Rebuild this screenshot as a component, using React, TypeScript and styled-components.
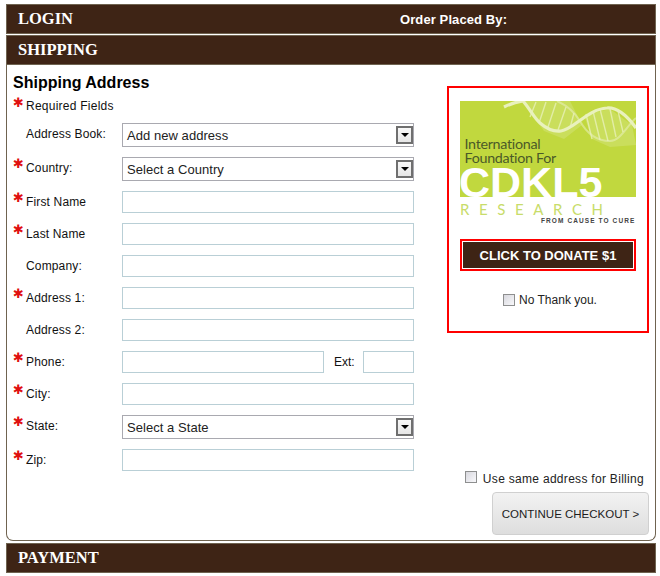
import React from "react";
import styled, { createGlobalStyle } from "styled-components";

const GlobalStyle = createGlobalStyle`
  html, body {
    margin: 0;
    padding: 0;
    background: #fff;
  }
  body {
    font-family: "Liberation Sans", Arial, sans-serif;
    color: #111;
  }
`;

const Page = styled.div`
  width: 650px;
  margin-left: 6px;
  padding-top: 4px;
`;

const Bar = styled.div<{ $gap?: number }>`
  box-sizing: border-box;
  height: 30px;
  margin-bottom: ${(p) => p.$gap ?? 0}px;
  display: flex;
  align-items: center;
  padding-left: 11px;
  background: #3e2415;
  border: 1px solid #6f6350;
  color: #fff;
`;

const BarTitle = styled.span`
  font-family: "Liberation Serif", serif;
  font-weight: bold;
  font-size: 16.5px;
  width: 382px;
`;

const OrderedBy = styled.span`
  font-size: 13px;
  font-weight: bold;
  letter-spacing: 0.1px;
`;

const Panel = styled.div`
  box-sizing: border-box;
  height: 476px;
  margin-bottom: 2px;
  display: flex;
  justify-content: space-between;
  border: 1px solid #6f6350;
  border-top: 0;
  border-radius: 0 0 7px 7px;
  padding: 8px 6px 5px 6px;
`;

const FormColumn = styled.div`
  width: 408px;
`;

const Heading = styled.h2`
  margin: 0;
  font-size: 16px;
  line-height: 19px;
  font-weight: bold;
  color: #000;
`;

const Required = styled.div`
  display: flex;
  align-items: center;
  height: 20px;
  margin-top: 4px;
  margin-bottom: 7px;
  font-size: 12px;
  letter-spacing: 0.25px;
`;

const Star = styled.span<{ $show: boolean }>`
  width: 13px;
  flex: none;
  align-self: flex-start;
  margin-top: -4px;
  color: #e01010;
  font-size: 13px;
  line-height: 22px;
  font-family: "DejaVu Sans", sans-serif;
  visibility: ${(p) => (p.$show ? "visible" : "hidden")};
`;

const Rows = styled.div`
  display: flex;
  flex-direction: column;
  gap: 10px;
`;

const Row = styled.div`
  display: flex;
  align-items: flex-start;
`;

const Label = styled.label`
  width: 96px;
  flex: none;
  padding-top: 1px;
  font-size: 12px;
  line-height: 20px;
  letter-spacing: 0.15px;
`;

const TextInput = styled.input<{ $width?: number }>`
  box-sizing: border-box;
  display: block;
  width: ${(p) => p.$width ?? 292}px;
  height: 22px;
  margin: 0;
  border: 1px solid #b9cfd6;
  background: #fff;
`;

const ExtLabel = styled.span`
  width: 39px;
  padding: 1px 0 0 10px;
  box-sizing: border-box;
  font-size: 12px;
  line-height: 20px;
`;

const SelectBox = styled.div`
  box-sizing: border-box;
  display: flex;
  align-items: center;
  justify-content: space-between;
  width: 292px;
  height: 24px;
  padding: 0 0 0 4px;
  border: 1px solid #a9a9b0;
  font-size: 13px;
  letter-spacing: 0.05px;
  color: #222;
`;

const SelectArrow = styled.span`
  box-sizing: border-box;
  display: flex;
  align-items: center;
  justify-content: center;
  width: 17px;
  height: 18px;
  border: 2px solid #6f6f6f;
  background: linear-gradient(#f8f8f8, #e6e6e6);

  &::after {
    content: "";
    border-left: 4px solid transparent;
    border-right: 4px solid transparent;
    border-top: 4px solid #000;
  }
`;

const SideColumn = styled.div`
  display: flex;
  flex-direction: column;
  justify-content: space-between;
  align-items: flex-end;
`;

const DonateBox = styled.div`
  box-sizing: border-box;
  width: 202px;
  height: 247px;
  margin-top: 13px;
  padding: 13px 11px 0 11px;
  border: 2px solid #f00;
  display: flex;
  flex-direction: column;
  align-items: center;
`;

const LogoSvg = styled.svg`
  display: block;
  flex: none;
  width: 176px;
  height: 124px;
`;

const DonateButton = styled.button`
  box-sizing: border-box;
  flex: none;
  width: 176px;
  height: 32px;
  margin-top: 14px;
  padding: 0;
  background: #3e2415;
  border: 2px solid #f00;
  box-shadow: inset 0 0 0 1px #fff;
  color: #fff;
  font-family: inherit;
  font-size: 13px;
  font-weight: bold;
`;

const CheckLine = styled.label`
  display: flex;
  align-items: center;
  margin: 22px 0 0 4px;
  font-size: 12px;
  color: #222;
`;

const Check = styled.input.attrs({ type: "checkbox" })`
  appearance: none;
  box-sizing: border-box;
  width: 12px;
  height: 12px;
  margin: 0 4px 0 0;
  border: 1px solid #8e8f8f;
  background: linear-gradient(135deg, #d8d8de, #f8f8fb);
`;

const BillingLine = styled(CheckLine)`
  margin: 0;
  padding-right: 5px;
  font-size: 12px;
  letter-spacing: 0.3px;
`;

const BillingCheck = styled(Check)`
  margin: -5px 6px 0 0;
`;

const FooterActions = styled.div`
  display: flex;
  flex-direction: column;
  align-items: flex-end;
`;

const ContinueButton = styled.button`
  box-sizing: border-box;
  width: 157px;
  height: 43px;
  margin-top: 6px;
  padding: 0;
  border: 1px solid #d0d0d0;
  border-radius: 4px;
  background: linear-gradient(#f2f2f2, #dedede);
  color: #1c1c1c;
  font-family: inherit;
  font-size: 11.5px;
`;

type Field =
  | { label: string; required: boolean; kind: "select"; value: string }
  | { label: string; required: boolean; kind: "text" }
  | { label: string; required: boolean; kind: "phone" };

const fields: Field[] = [
  { label: "Address Book:", required: false, kind: "select", value: "Add new address" },
  { label: "Country:", required: true, kind: "select", value: "Select a Country" },
  { label: "First Name", required: true, kind: "text" },
  { label: "Last Name", required: true, kind: "text" },
  { label: "Company:", required: false, kind: "text" },
  { label: "Address 1:", required: true, kind: "text" },
  { label: "Address 2:", required: false, kind: "text" },
  { label: "Phone:", required: true, kind: "phone" },
  { label: "City:", required: true, kind: "text" },
  { label: "State:", required: true, kind: "select", value: "Select a State" },
  { label: "Zip:", required: true, kind: "text" },
];

const Logo = () => (
  <LogoSvg viewBox="0 0 176 124">
    <rect x="0" y="0" width="176" height="96" fill="#c1d83e" />
    <g fill="#cfe16a" opacity="0.7">
      <path d="M62 0L110 0L122 24L104 38L84 30Z" />
      <path d="M124 14L150 8L172 24L176 44L150 46L132 38Z" />
    </g>
    <g fill="none" stroke="#e9f1bd">
      <path d="M97 0C106 4 114 10 120 20C126 31 136 40 150 40C160 40 166 26 176 17" strokeWidth="2" opacity="0.55" />
      <path d="M44 6C50 3 56 1 63 0C70 8 74 17 80 22C87 28 94 31 101 30C114 28 128 8 147 7C158 6 168 16 176 27" strokeWidth="3.2" />
      <path d="M76 1L70 16M86 1L79 22M96 2L88 26M106 6L98 29M114 12L110 27M126 13L132 38M133 10L140 39M140 8L148 40M150 8L156 36M158 10L163 31" strokeWidth="1.4" opacity="0.75" />
    </g>
    <g fontFamily="Lato, sans-serif" fontSize="14.3" fill="#4b5a28" letterSpacing="-0.3">
      <text x="4.5" y="48">International</text>
      <text x="4.5" y="62">Foundation For</text>
    </g>
    <text x="-1" y="96" fontFamily="Liberation Sans, sans-serif" fontWeight="bold" fontSize="43" fill="#fff">
      CDKL5
    </text>
    <text x="0" y="114" fontFamily="Lato, sans-serif" fontSize="15" fill="#c8dc6a" letterSpacing="9.6">
      RESEARCH
    </text>
    <text x="81" y="122" fontFamily="Liberation Sans, sans-serif" fontWeight="bold" fontSize="6.5" fill="#444" letterSpacing="1.1">
      FROM CAUSE TO CURE
    </text>
  </LogoSvg>
);

export default function App() {
  return (
    <Page>
      <GlobalStyle />
      <Bar $gap={1}>
        <BarTitle>LOGIN</BarTitle>
        <OrderedBy>Order Placed By:</OrderedBy>
      </Bar>
      <Bar>
        <BarTitle>SHIPPING</BarTitle>
      </Bar>
      <Panel>
        <FormColumn>
          <Heading>Shipping Address</Heading>
          <Required>
            <Star $show>✱</Star>
            Required Fields
          </Required>
          <Rows>
            {fields.map((f) => (
              <Row key={f.label}>
                <Star $show={f.required}>✱</Star>
                <Label>{f.label}</Label>
                {f.kind === "select" && (
                  <SelectBox>
                    {f.value}
                    <SelectArrow />
                  </SelectBox>
                )}
                {f.kind === "text" && <TextInput />}
                {f.kind === "phone" && (
                  <>
                    <TextInput $width={202} />
                    <ExtLabel>Ext:</ExtLabel>
                    <TextInput $width={51} />
                  </>
                )}
              </Row>
            ))}
          </Rows>
        </FormColumn>
        <SideColumn>
          <DonateBox>
            <Logo />
            <DonateButton>CLICK TO DONATE $1</DonateButton>
            <CheckLine>
              <Check />
              No Thank you.
            </CheckLine>
          </DonateBox>
          <FooterActions>
            <BillingLine>
              <BillingCheck />
              Use same address for Billing
            </BillingLine>
            <ContinueButton>CONTINUE CHECKOUT &gt;</ContinueButton>
          </FooterActions>
        </SideColumn>
      </Panel>
      <Bar>
        <BarTitle>PAYMENT</BarTitle>
      </Bar>
    </Page>
  );
}
